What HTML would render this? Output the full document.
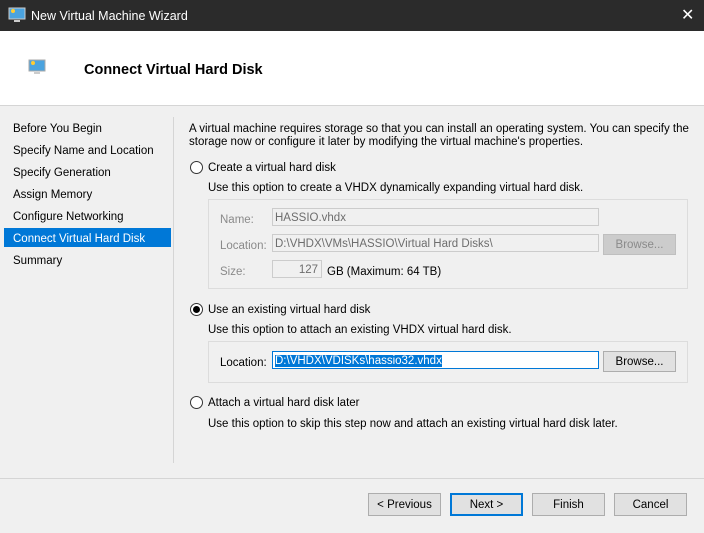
<!DOCTYPE html><html><head><style>
body{margin:0;width:704px;height:533px;overflow:hidden;font-family:"Liberation Sans",sans-serif;font-size:11.5px;color:#000;background:#f0f0f0;position:relative}
.a{position:absolute;white-space:nowrap}
.t{margin-top:2px}
.tb{position:absolute;left:0;top:0;width:704px;height:31px;background:#2b2b2b;color:#fff}
.hd{position:absolute;left:0;top:31px;width:704px;height:74px;background:#fff;border-bottom:1px solid #d5d5d5}
.nav{left:13px;margin-top:2px}
.sel{position:absolute;left:4px;top:228px;width:167px;height:19px;background:#0078d7}
.radio{position:absolute;width:11px;height:11px;border:1px solid #333;border-radius:50%;background:#fff}
.box{position:absolute;border:1px solid #dcdcdc}
.in{position:absolute;height:18px;border:1px solid #ccc;background:#f0f0f0;color:#6d6d6d;line-height:19px;padding-left:2px;box-sizing:border-box}
.btn{position:absolute;height:23px;border:1px solid #adadad;background:#e1e1e1;box-sizing:border-box;text-align:center;line-height:23px}
.g{color:#8a8a8a}
</style></head><body>
<div class="tb">
<svg class="a" style="left:8px;top:7px" width="18" height="16"><rect x="1" y="1" width="16" height="11" fill="#4aa3df" stroke="#ccc"/><circle cx="5" cy="4" r="2" fill="#ffcc33"/><rect x="6" y="13" width="6" height="2" fill="#ccc"/></svg>
<div class="a" style="left:31px;top:9px;font-size:12.5px">New Virtual Machine Wizard</div>
<div class="a" style="left:681px;top:5px;font-size:16px">✕</div>
</div>
<div class="hd">
<svg class="a" style="left:28px;top:28px" width="18" height="16"><rect x="1" y="1" width="16" height="11" fill="#4aa3df" stroke="#aaa"/><circle cx="5" cy="4" r="2" fill="#ffcc33"/><rect x="6" y="13" width="6" height="2" fill="#ccc"/></svg>
<div class="a" style="left:84px;top:31px;font-size:14.5px;font-weight:bold">Connect Virtual Hard Disk</div>
</div>
<div class="a" style="left:173px;top:117px;width:1px;height:346px;background:#d5d5d5"></div>
<div class="sel"></div>
<div class="a nav" style="top:121px">Before You Begin</div>
<div class="a nav" style="top:143px">Specify Name and Location</div>
<div class="a nav" style="top:165px">Specify Generation</div>
<div class="a nav" style="top:187px">Assign Memory</div>
<div class="a nav" style="top:209px">Configure Networking</div>
<div class="a nav" style="top:231px;color:#fff">Connect Virtual Hard Disk</div>
<div class="a nav" style="top:253px">Summary</div>
<div class="a t" style="left:189px;top:121px;line-height:13px">A virtual machine requires storage so that you can install an operating system. You can specify the<br>storage now or configure it later by modifying the virtual machine's properties.</div>
<div class="radio" style="left:190px;top:161px"></div>
<div class="a t" style="left:208px;top:160px">Create a virtual hard disk</div>
<div class="a t" style="left:208px;top:180px">Use this option to create a VHDX dynamically expanding virtual hard disk.</div>
<div class="box" style="left:208px;top:199px;width:478px;height:88px"></div>
<div class="a g t" style="left:220px;top:212px">Name:</div>
<div class="in" style="left:272px;top:208px;width:327px">HASSIO.vhdx</div>
<div class="a g t" style="left:220px;top:238px">Location:</div>
<div class="in" style="left:272px;top:234px;width:327px">D:\VHDX\VMs\HASSIO\Virtual Hard Disks\</div>
<div class="btn g" style="left:603px;top:234px;width:73px;background:#ccc;border-color:#bfbfbf;height:21px;line-height:21px">Browse...</div>
<div class="a g t" style="left:220px;top:264px">Size:</div>
<div class="in" style="left:272px;top:260px;width:50px;text-align:right;padding-right:3px">127</div>
<div class="a t" style="left:327px;top:264px">GB (Maximum: 64 TB)</div>
<div class="radio" style="left:190px;top:303px"></div><div class="a" style="left:193px;top:306px;width:7px;height:7px;border-radius:50%;background:#000"></div>
<div class="a t" style="left:208px;top:302px">Use an existing virtual hard disk</div>
<div class="a t" style="left:208px;top:322px">Use this option to attach an existing VHDX virtual hard disk.</div>
<div class="box" style="left:208px;top:341px;width:478px;height:40px"></div>
<div class="a t" style="left:220px;top:355px">Location:</div>
<div class="in" style="left:272px;top:351px;width:327px;background:#fff;border-color:#0078d7;color:#fff"><span style="background:#0078d7">D:\VHDX\VDISKs\hassio32.vhdx</span></div>
<div class="btn" style="left:603px;top:351px;width:73px;height:21px;line-height:21px">Browse...</div>
<div class="radio" style="left:190px;top:396px"></div>
<div class="a t" style="left:208px;top:395px">Attach a virtual hard disk later</div>
<div class="a t" style="left:208px;top:416px">Use this option to skip this step now and attach an existing virtual hard disk later.</div>
<div class="a" style="left:0;top:478px;width:704px;height:1px;background:#d5d5d5"></div>
<div class="btn" style="left:368px;top:493px;width:73px">&lt; Previous</div>
<div class="btn" style="left:450px;top:493px;width:73px;border:2px solid #0078d7;line-height:21px">Next &gt;</div>
<div class="btn" style="left:532px;top:493px;width:73px">Finish</div>
<div class="btn" style="left:614px;top:493px;width:73px">Cancel</div>
</body></html>
